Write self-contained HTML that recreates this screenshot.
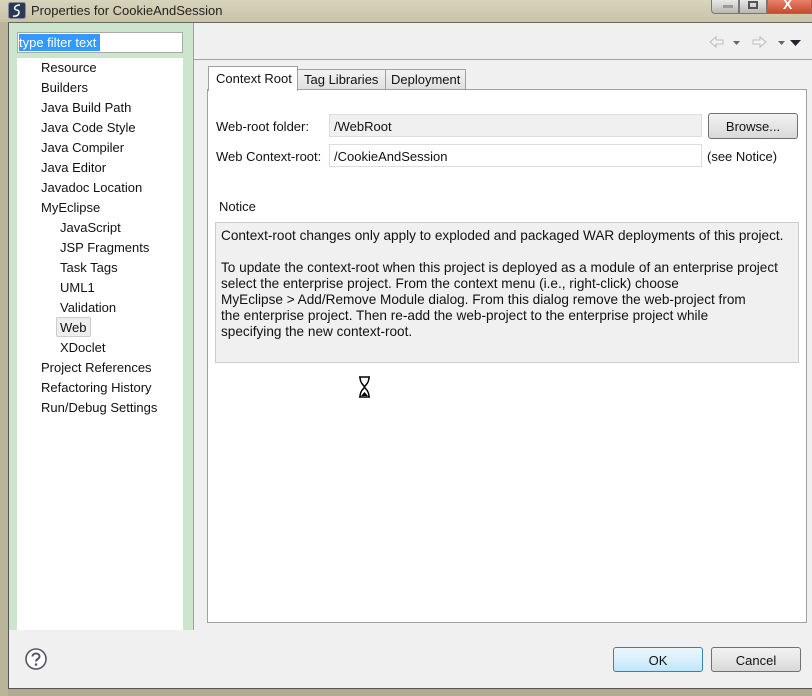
<!DOCTYPE html>
<html><head><style>
*{margin:0;padding:0;box-sizing:border-box}
body{width:812px;height:696px;overflow:hidden;background:#b9b49a;font-family:"Liberation Sans",sans-serif;font-size:12.5px;color:#111;position:relative}
.a{position:absolute}
.title{left:0;top:0;width:812px;height:22px;background:linear-gradient(#d8d4bc,#c8c3a6)}
.dlg{left:8px;top:22px;width:804px;height:668px;background:#f0f0f0;border-left:1px solid #555;border-top:1px solid #666}
.green{left:9px;top:23px;width:185px;height:607px;background:#cce5cc;border-right:1px solid #a0a0a0}
.tree div{position:absolute;white-space:nowrap}
.btn{border:1px solid #707070;border-radius:3px;background:linear-gradient(#f2f2f2,#e6e6e6 50%,#d8d8d8);text-align:center}
.notice div{height:16px;white-space:nowrap}
</style></head><body>
<div class="a title"></div>
<svg class="a" style="left:8px;top:2px" width="18" height="17"><rect x="0.5" y="0.5" width="17" height="16" rx="2" fill="#2a3a55" stroke="#889"/><path d="M12 3 C6 3 5 8 9 8 C13 9 11 15 5 14" stroke="#fff" stroke-width="1.5" fill="none"/></svg>
<div class="a" style="left:31px;top:3px;font-size:13px;color:#222">Properties for CookieAndSession</div>
<div class="a" style="left:711px;top:0;width:28px;height:14px;background:linear-gradient(#e8e8e8,#b8b8b0);border:1px solid #777;border-top:none;border-radius:0 0 0 4px"></div>
<div class="a" style="left:739px;top:0;width:28px;height:14px;background:linear-gradient(#e8e8e8,#b8b8b0);border:1px solid #777;border-top:none"></div>
<div class="a" style="left:767px;top:0;width:45px;height:14px;background:linear-gradient(#e8806a,#c84a30);border:1px solid #777;border-top:none"></div>
<div class="a" style="left:723px;top:5px;width:10px;height:3px;background:#999"></div>
<div class="a" style="left:748px;top:1px;width:10px;height:8px;border:2px solid #555"></div>
<div class="a" style="left:783px;top:-4px;color:#fff;font-weight:bold;font-size:14px">X</div>
<div class="a dlg"></div>
<div class="a green"></div>
<div class="a" style="left:194px;top:59px;width:618px;height:1px;background:#a0a0a0"></div>
<div class="a" style="left:17px;top:32px;width:166px;height:21px;background:#fff;border:1px solid #a8a8a8"></div>
<div class="a" style="left:19px;top:34px;width:81px;height:17px;background:#3399ff;color:#fff;font-size:13px;line-height:17px">type filter text</div>
<div class="a" style="left:17px;top:58px;width:166px;height:572px;background:#fff"></div>
<div class="a tree" style="left:0;top:0;font-size:13px">
<div style="left:41px;top:60px">Resource</div>
<div style="left:41px;top:80px">Builders</div>
<div style="left:41px;top:100px">Java Build Path</div>
<div style="left:41px;top:120px">Java Code Style</div>
<div style="left:41px;top:140px">Java Compiler</div>
<div style="left:41px;top:160px">Java Editor</div>
<div style="left:41px;top:180px">Javadoc Location</div>
<div style="left:41px;top:200px">MyEclipse</div>
<div style="left:60px;top:220px">JavaScript</div>
<div style="left:60px;top:240px">JSP Fragments</div>
<div style="left:60px;top:260px">Task Tags</div>
<div style="left:60px;top:280px">UML1</div>
<div style="left:60px;top:300px">Validation</div>
<div style="left:56px;top:317px;width:35px;height:20px;background:#eee;border:1px solid #ccc;border-radius:2px"></div>
<div style="left:60px;top:320px">Web</div>
<div style="left:60px;top:340px">XDoclet</div>
<div style="left:41px;top:360px">Project References</div>
<div style="left:41px;top:380px">Refactoring History</div>
<div style="left:41px;top:400px">Run/Debug Settings</div>
</div>
<svg class="a" style="left:706px;top:34px" width="100" height="16">
<path d="M4 8 L10 3 V6 H17 V10 H10 V13 Z" fill="#f4f4f4" stroke="#bbb"/>
<path d="M27 7 h7 l-3.5 4z" fill="#666"/>
<path d="M60 8 L54 3 V6 H47 V10 H54 V13 Z" fill="#f4f4f4" stroke="#bbb"/>
<path d="M72 7 h7 l-3.5 4z" fill="#666"/>
<path d="M84 6 h11 l-5.5 6z" fill="#223"/>
</svg>
<div class="a" style="left:207px;top:89px;width:600px;height:534px;background:#fff;border:1px solid #a0a0a0"></div>
<div class="a" style="left:208px;top:66px;width:90px;height:25px;background:#fff;border:1px solid #a0a0a0;border-bottom:none;padding:4px 0 0 7px;font-size:13px">Context Root</div>
<div class="a" style="left:297px;top:69px;width:89px;height:21px;background:linear-gradient(#f2f2f2,#e0e0e0);border:1px solid #a0a0a0;padding:2px 0 0 6px;font-size:13px">Tag Libraries</div>
<div class="a" style="left:385px;top:69px;width:81px;height:21px;background:linear-gradient(#f2f2f2,#e0e0e0);border:1px solid #a0a0a0;padding:2px 0 0 5px;font-size:13px">Deployment</div>
<div class="a" style="left:216px;top:119px;font-size:13px">Web-root folder:</div>
<div class="a" style="left:329px;top:114px;width:373px;height:23px;background:#f0f0f0;border:1px solid #ddd;padding:4px 0 0 4px;font-size:13px">/WebRoot</div>
<div class="a btn" style="left:708px;top:113px;width:90px;height:26px;padding-top:5px;font-size:13px">Browse...</div>
<div class="a" style="left:216px;top:149px;font-size:13px">Web Context-root:</div>
<div class="a" style="left:329px;top:144px;width:373px;height:23px;background:#fff;border:1px solid #ddd;padding:4px 0 0 4px;font-size:13px">/CookieAndSession</div>
<div class="a" style="left:707px;top:149px;font-size:13px">(see Notice)</div>
<div class="a" style="left:219px;top:199px;font-size:13px">Notice</div>
<div class="a notice" style="left:215px;top:222px;width:584px;height:141px;background:#f0f0f0;border:1px solid #ccc;padding:5px 0 0 5px;font-size:13.6px;letter-spacing:0">
<div>Context-root changes only apply to exploded and packaged WAR deployments of this project.</div>
<div></div>
<div>To update the context-root when this project is deployed as a module of an enterprise project</div>
<div>select the enterprise project. From the context menu (i.e., right-click) choose</div>
<div>MyEclipse &gt; Add/Remove Module dialog. From this dialog remove the web-project from</div>
<div>the enterprise project. Then re-add the web-project to the enterprise project while</div>
<div>specifying the new context-root.</div>
</div>
<svg class="a" style="left:357px;top:376px" width="15" height="22"><path d="M2 1H13M2 21H13M3 1C3 8 7 9 7.5 11C8 9 12 8 12 1M3 21C3 14 7 13 7.5 11C8 13 12 14 12 21" stroke="#000" stroke-width="1.5" fill="none"/><path d="M4 20 L7.5 16 L11 20Z" fill="#000"/></svg>
<svg class="a" style="left:24px;top:647px" width="24" height="24"><circle cx="12" cy="12" r="10" fill="#fff" stroke="#556" stroke-width="1.6"/><path d="M8.5 9.5 C8.5 5.5 15.5 5.5 15.5 9.5 C15.5 12 12 12 12 14.5" stroke="#556" stroke-width="2" fill="none"/><circle cx="12" cy="17.5" r="1.3" fill="#556"/></svg>
<div class="a btn" style="left:613px;top:647px;width:90px;height:25px;padding-top:5px;border-color:#3c7fb1;background:linear-gradient(#eaf6fd,#d9f0fc 50%,#bee6fd);font-size:13px">OK</div>
<div class="a btn" style="left:711px;top:647px;width:90px;height:25px;padding-top:5px;font-size:13px">Cancel</div>
<div class="a" style="left:8px;top:688px;width:804px;height:8px;background:#b0ab92;border-top:1px solid #555"></div>
</body></html>
